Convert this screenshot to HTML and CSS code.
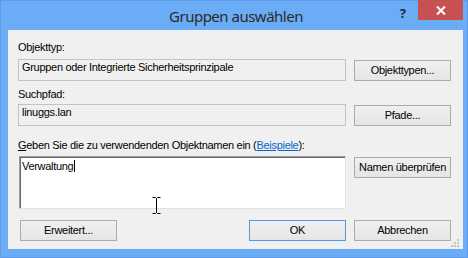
FILE: index.html
```html
<!DOCTYPE html>
<html lang="de">
<head>
<meta charset="utf-8">
<title>Gruppen auswählen</title>
<link rel="stylesheet" href="styles.css">
</head>
<body>
<div class="window">
  <div class="titlebar">
    <div class="title-spacer"></div>
    <div class="title">Gruppen auswählen</div>
    <div class="caption-buttons">
      <span class="help">?</span>
      <span class="close">
        <svg width="10" height="9" viewBox="0 0 10 9"><path d="M1 0.5 L9 8.5 M9 0.5 L1 8.5" stroke="#fff" stroke-width="2" fill="none"/></svg>
      </span>
    </div>
  </div>
  <div class="client">
    <div class="label label-1">Objekttyp:</div>
    <div class="row row-1">
      <div class="field">Gruppen oder Integrierte Sicherheitsprinzipale</div>
      <div class="btn">Objekttypen...</div>
    </div>
    <div class="label label-2">Suchpfad:</div>
    <div class="row row-2">
      <div class="field">linuggs.lan</div>
      <div class="btn">Pfade...</div>
    </div>
    <div class="label label-3"><span class="ak">G</span>eben Sie die zu verwendenden Objektnamen ein (<span class="link">Beispiele</span>):</div>
    <div class="row row-3">
      <div class="editbox"><span class="value">Verwaltung</span><span class="caret"></span></div>
      <div class="btn btn-check">Namen überprüfen</div>
    </div>
    <div class="row row-4">
      <div class="btn btn-adv">Erweitert...</div>
      <div class="push"></div>
      <div class="btn btn-default">OK</div>
      <div class="btn">Abbrechen</div>
    </div>
    <svg class="grip" width="9" height="9" viewBox="0 0 9 9">
      <rect x="6" y="0" width="2" height="2" fill="#c4c4c4"/>
      <rect x="3" y="3" width="2" height="2" fill="#c4c4c4"/>
      <rect x="6" y="3" width="2" height="2" fill="#c4c4c4"/>
      <rect x="0" y="6" width="2" height="2" fill="#c4c4c4"/>
      <rect x="3" y="6" width="2" height="2" fill="#c4c4c4"/>
      <rect x="6" y="6" width="2" height="2" fill="#c4c4c4"/>
    </svg>
    <svg class="ibeam" width="9" height="17" viewBox="0 0 9 17">
      <path d="M0.5 0.5 H3.5 L4.5 1.5 L5.5 0.5 H8.5 M4.5 1.5 V15.5 M0.5 16.5 H3.5 L4.5 15.5 L5.5 16.5 H8.5" stroke="#000" stroke-width="1" fill="none"/>
    </svg>
  </div>
</div>
</body>
</html>
```
FILE: styles.css
```css
* { box-sizing: border-box; }
html, body { margin: 0; padding: 0; }
body {
  width: 468px;
  height: 258px;
  overflow: hidden;
  background: #6aadf6;
}
.window {
  width: 468px;
  height: 258px;
  background: #6aadf6;
  border: 1px solid #5a9ce6;
  display: flex;
  flex-direction: column;
  padding: 0 4px 8px 7px;
}
.titlebar {
  height: 29px;
  display: grid;
  grid-template-columns: 1fr auto 1fr;
  align-items: start;
}
.title {
  font-family: "Noto Sans", "Open Sans", sans-serif;
  font-size: 15px;
  letter-spacing: -0.5px;
  color: #2a2a2a;
  line-height: 20px;
  padding-top: 5px;
  padding-left: 1px;
}
.caption-buttons {
  display: flex;
  justify-content: flex-end;
  align-items: flex-start;
}
.help {
  font-family: "Noto Sans", "DejaVu Sans", sans-serif;
  font-weight: bold;
  font-size: 13px;
  color: #1e2a3a;
  line-height: 16px;
  margin-top: 4px;
  margin-right: 12px;
}
.close {
  width: 45px;
  height: 20px;
  margin-top: -1px;
  background: #c75050;
  display: flex;
  align-items: center;
  justify-content: center;
}
.client {
  position: relative;
  flex: 1;
  background: #f0f0f0;
  padding: 0 12px 0 10px;
  display: flex;
  flex-direction: column;
  font-family: "Liberation Sans", Arial, sans-serif;
  font-size: 11px;
  letter-spacing: -0.3px;
  line-height: 13px;
  color: #000;
}
.label-1 { margin-top: 11px; }
.label-2 { margin-top: 7px; }
.label-3 { margin-top: 13px; }
.ak { text-decoration: underline; }
.link { color: #0066cc; text-decoration: underline; }
.row {
  display: flex;
  gap: 8px;
}
.row-1 { margin-top: 5px; align-items: flex-end; }
.row-2 { margin-top: 3px; align-items: flex-end; }
.row-3 { margin-top: 4px; align-items: flex-start; }
.row-4 { margin-top: 11px; }
.field {
  width: 328px;
  height: 22px;
  border: 1px solid #c3c3c3;
  background: #f0f0f0;
  padding: 1px 3px;
  white-space: nowrap;
  overflow: hidden;
}
.btn {
  width: 97px;
  height: 21px;
  border: 1px solid #acacac;
  background: linear-gradient(#f0f0f0, #e5e5e5);
  display: flex;
  align-items: center;
  justify-content: center;
  white-space: nowrap;
}
.btn-check { margin-top: 1px; }
.btn-adv { margin-left: 2px; }
.btn-default { border-color: #4d9ae6; }
.push { flex: 1; }
.editbox {
  width: 327px;
  margin-left: 1px;
  height: 53px;
  background: #fff;
  border-top: 1px solid #a0a0a0;
  border-left: 1px solid #a0a0a0;
  border-right: 1px solid #e3e3e3;
  border-bottom: 1px solid #e3e3e3;
  box-shadow: inset 1px 1px 0 #696969;
  padding: 3px 2px;
  display: flex;
  align-items: flex-start;
}
.caret {
  display: inline-block;
  width: 1px;
  height: 12px;
  background: #000;
  margin-left: 1px;
  margin-top: 0;
}
.grip {
  position: absolute;
  right: 3px;
  bottom: 1px;
}
.ibeam {
  position: absolute;
  left: 144px;
  top: 167px;
}
```
